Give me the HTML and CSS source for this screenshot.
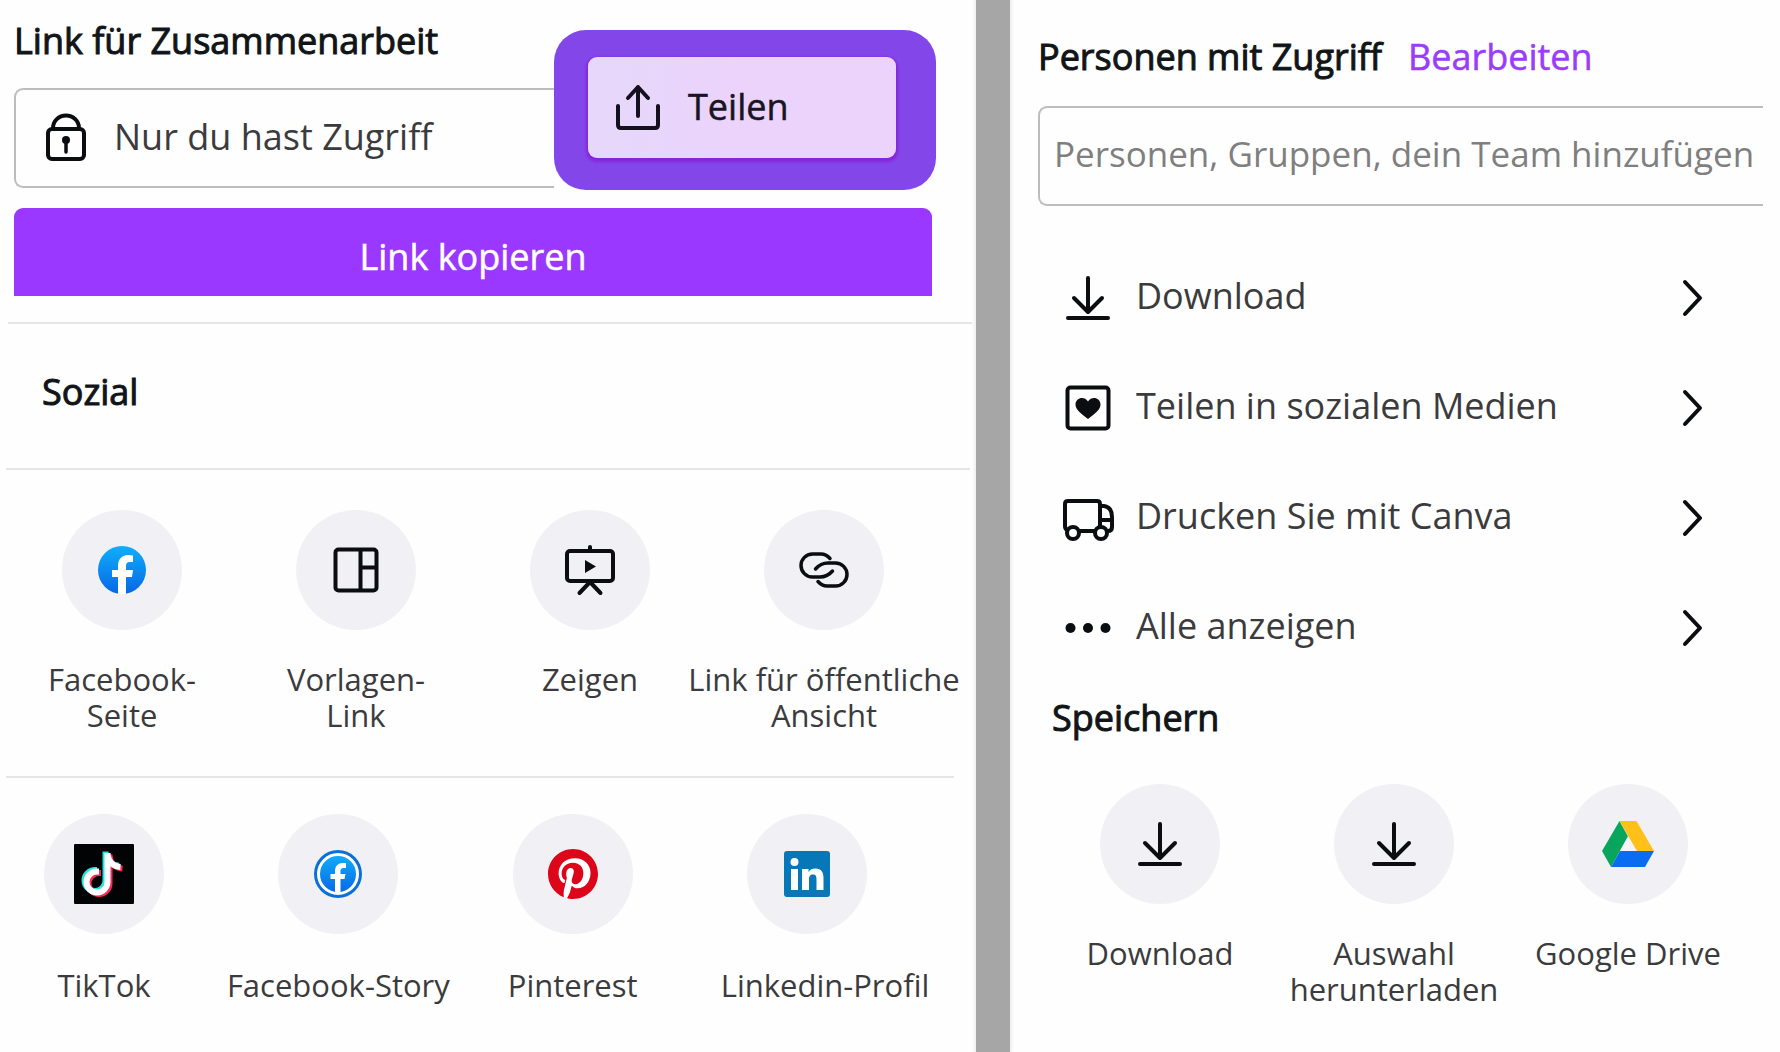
FILE: index.html
```html
<!DOCTYPE html>
<html lang="de">
<head>
<meta charset="utf-8">
<meta name="viewport" content="width=device-width, initial-scale=1">
<title>Teilen</title>
<link rel="stylesheet" href="styles.css">
</head>
<body>
<main class="page">
  <section class="panel panel-share">
    <div class="top">
      <div class="access">
        <h2 class="title">Link für Zusammenarbeit</h2>
        <button type="button" class="field">
          <svg class="lock" viewBox="0 0 40 48" width="40" height="48" fill="none" stroke="#0b0d10" stroke-width="4"><rect x="2" y="16" width="36" height="30" rx="4"/><path d="M7 16v-1a13 12.500 0 0 1 26 0v1"/><circle cx="20" cy="27" r="4" fill="#0b0d10" stroke="none"/><path d="M20 28v11" stroke-width="3.500" stroke-linecap="round"/></svg>
          <span>Nur du hast Zugriff</span>
        </button>
      </div>
      <div class="highlight">
        <button type="button" class="share">
          <svg viewBox="0 0 44 46" width="44" height="46" fill="none" stroke="#15101f" stroke-width="4" stroke-linecap="round" stroke-linejoin="round"><path d="M2 22v19q0 3 3 3h34q3 0 3-3V22M22 32V3M12 14 22 3l10 11"/></svg>
          <span>Teilen</span>
        </button>
      </div>
    </div>
    <button type="button" class="copy">Link kopieren</button>

    <h2 class="title social">Sozial</h2>

    <div class="tiles tiles-links">
      <button type="button" class="tile">
        <span class="disc"><svg viewBox="0 0 48 48" width="48" height="48"><defs><linearGradient id="fb" x1="0" y1="0" x2="0" y2="1"><stop offset="0" stop-color="#10aefb"/><stop offset="1" stop-color="#0767e4"/></linearGradient></defs><circle cx="24" cy="24" r="24" fill="url(#fb)"/><path d="M20 48V31h-6v-7h6v-4c0-7 4-11 10-11q3 0 5 .5V16h-3c-3 0-4 1.500-4 4v4h7l-1 7h-6v17z" fill="#fff"/></svg></span>
        <span>Facebook-<br>Seite</span>
      </button>
      <button type="button" class="tile">
        <span class="disc"><svg viewBox="0 0 46 46" width="46" height="46" fill="none" stroke="#0b0d10" stroke-width="4"><rect x="2.500" y="2.500" width="41" height="41" rx="3"/><path d="M27.500 2v42M27.500 20.500H44"/></svg></span>
        <span>Vorlagen-<br>Link</span>
      </button>
      <button type="button" class="tile">
        <span class="disc"><svg viewBox="0 0 50 52" width="50" height="52" fill="none" stroke="#0b0d10" stroke-width="4" stroke-linecap="round"><rect x="2" y="7" width="46" height="30" rx="3"/><path d="M25 3v4M25 38 14.500 49M25 38l10.500 11"/><path d="m20 16 11 6.500L20 29z" fill="#0b0d10" stroke="none"/></svg></span>
        <span>Zeigen</span>
      </button>
      <button type="button" class="tile">
        <span class="disc"><svg viewBox="0 0 50 36" width="50" height="36" fill="none" stroke="#0b0d10" stroke-width="3.500" stroke-linecap="round"><path d="M31 6.500Q27 2 22 2h-8.500a11.500 11.500 0 0 0 0 23H21c6 0 9-2 12.500-6"/><path d="M19 29.500Q23 34 28 34h8.500a11.500 11.500 0 0 0 0-23H29c-6 0-9 2-12.500 6"/></svg></span>
        <span>Link für öffentliche<br>Ansicht</span>
      </button>
    </div>

    <div class="tiles tiles-social">
      <button type="button" class="tile">
        <span class="disc"><svg viewBox="0 0 60 60" width="60" height="60"><rect width="60" height="60" rx="1" fill="#020305"/><g fill="none" stroke-width="6"><path d="M33.500 9v29a10.500 10.500 0 1 1-10.500-10.500h2M33.500 10c1 8 6 12.500 13 13" stroke="#25e5de" transform="translate(-2 -1.500)"/><path d="M33.500 9v29a10.500 10.500 0 1 1-10.500-10.500h2M33.500 10c1 8 6 12.500 13 13" stroke="#f9275a" transform="translate(2 1.500)"/><path d="M33.500 9v29a10.500 10.500 0 1 1-10.500-10.500h2M33.500 10c1 8 6 12.500 13 13" stroke="#fff"/></g></svg></span>
        <span>TikTok</span>
      </button>
      <button type="button" class="tile">
        <span class="disc"><svg viewBox="0 0 48 48" width="48" height="48"><circle cx="24" cy="24" r="24" fill="#0b6fd8"/><circle cx="24" cy="24" r="19.500" fill="url(#fb)" stroke="#fff" stroke-width="3"/><path d="M21 43V29h-4.500v-5H21v-3c0-5 3-8 8-8h3v5h-2.500c-2 0-3 1-3 3v3h5l-1 5h-4v14z" fill="#fff"/></svg></span>
        <span>Facebook-Story</span>
      </button>
      <button type="button" class="tile">
        <span class="disc"><svg viewBox="0 0 24 24" width="50" height="50"><circle cx="12" cy="12" r="11.500" fill="#fff"/><path fill="#dc0519" d="M12 0C5.373 0 0 5.373 0 12c0 5.084 3.163 9.426 7.627 11.174-.105-.949-.2-2.405.042-3.441.218-.937 1.407-5.965 1.407-5.965s-.359-.719-.359-1.782c0-1.668.967-2.914 2.171-2.914 1.023 0 1.518.769 1.518 1.690 0 1.029-.655 2.568-.994 3.995-.283 1.194.599 2.169 1.777 2.169 2.133 0 3.772-2.249 3.772-5.495 0-2.873-2.064-4.882-5.012-4.882-3.414 0-5.418 2.561-5.418 5.207 0 1.031.397 2.138.893 2.738.98.119.112.224.83.345l-.333 1.360c-.53.220-.174.267-.402.161-1.499-.698-2.436-2.889-2.436-4.649 0-3.785 2.750-7.262 7.929-7.262 4.163 0 7.398 2.967 7.398 6.931 0 4.136-2.607 7.464-6.227 7.464-1.216 0-2.359-.631-2.750-1.378l-.748 2.853c-.271 1.043-1.002 2.350-1.492 3.146C9.570 23.812 10.763 24 12 24c6.627 0 12-5.373 12-12S18.627 0 12 0z"/></svg></span>
        <span>Pinterest</span>
      </button>
      <button type="button" class="tile">
        <span class="disc"><svg viewBox="0 0 46 46" width="46" height="46"><rect width="46" height="46" rx="3" fill="#0777b8"/><g fill="#fff"><circle cx="10.500" cy="11" r="4"/><path d="M7 18h7v21H7zM18 18h6.500v3c1.500-2.500 4-3.600 7-3.600 6 0 8 4 8 9.600v12h-7V28.500c0-3-.5-5-3.500-5s-4 2-4 5V39h-7z"/></g></svg></span>
        <span class="label-end">Linkedin-Profil</span>
      </button>
    </div>
  </section>

  <div class="divider"></div>

  <section class="panel panel-people">
    <div class="people-head">
      <h2 class="title">Personen mit Zugriff</h2>
      <a class="edit" href="#">Bearbeiten</a>
    </div>
    <input class="people" type="text" aria-label="Personen hinzufügen" placeholder="Personen, Gruppen, dein Team hinzufügen">

    <nav class="actions">
      <button type="button" class="action">
        <span class="icon"><svg viewBox="0 0 46 46" width="46" height="46" fill="none" stroke="#0b0d10" stroke-width="4" stroke-linecap="round" stroke-linejoin="round"><path d="M23 3v33M9 23l14 14 14-14"/><path d="M3 43h40"/></svg></span>
        <span class="action-label">Download</span>
        <svg class="chevron" viewBox="0 0 22 38" width="22" height="38" fill="none" stroke="#0b0d10" stroke-width="4" stroke-linecap="round" stroke-linejoin="round"><path d="m3 3 15 16L3 35"/></svg>
      </button>
      <button type="button" class="action">
        <span class="icon"><svg viewBox="0 0 46 46" width="46" height="46" fill="none" stroke="#0b0d10" stroke-width="4"><rect x="2.500" y="2.500" width="41" height="41" rx="3"/><path d="M23 34C17 29 10.500 25 10.500 19.500c0-7 9-9 12.500-3 3.500-6 12.500-4 12.500 3C35.500 25 29 29 23 34z" fill="#0b0d10" stroke="none"/></svg></span>
        <span class="action-label">Teilen in sozialen Medien</span>
        <svg class="chevron" viewBox="0 0 22 38" width="22" height="38" fill="none" stroke="#0b0d10" stroke-width="4" stroke-linecap="round" stroke-linejoin="round"><path d="m3 3 15 16L3 35"/></svg>
      </button>
      <button type="button" class="action">
        <span class="icon"><svg viewBox="0 -4 52 46" width="52" height="46" fill="none" stroke="#0b0d10" stroke-width="4" stroke-linejoin="round"><path d="M5 31q-2-1-2-4V5q0-3 3-3h29q3 0 3 3v27H17M38 7h4q8 1 8 11v10q0 4-4 4M38 21h12"/><circle cx="11" cy="34" r="6" fill="#fff"/><circle cx="39" cy="34" r="6" fill="#fff"/></svg></span>
        <span class="action-label">Drucken Sie mit Canva</span>
        <svg class="chevron" viewBox="0 0 22 38" width="22" height="38" fill="none" stroke="#0b0d10" stroke-width="4" stroke-linecap="round" stroke-linejoin="round"><path d="m3 3 15 16L3 35"/></svg>
      </button>
      <button type="button" class="action">
        <span class="icon"><svg viewBox="0 0 46 12" width="46" height="12" fill="#0b0d10"><circle cx="5.500" cy="6" r="5"/><circle cx="23" cy="6" r="5"/><circle cx="40.500" cy="6" r="5"/></svg></span>
        <span class="action-label">Alle anzeigen</span>
        <svg class="chevron" viewBox="0 0 22 38" width="22" height="38" fill="none" stroke="#0b0d10" stroke-width="4" stroke-linecap="round" stroke-linejoin="round"><path d="m3 3 15 16L3 35"/></svg>
      </button>
    </nav>

    <h2 class="title save">Speichern</h2>
    <div class="tiles tiles-save">
      <button type="button" class="tile">
        <span class="disc"><svg viewBox="0 0 46 46" width="46" height="46" fill="none" stroke="#0b0d10" stroke-width="4" stroke-linecap="round" stroke-linejoin="round"><path d="M23 3v33M8 22l15 15 15-15"/><path d="M3 43h40"/></svg></span>
        <span>Download</span>
      </button>
      <button type="button" class="tile">
        <span class="disc"><svg viewBox="0 0 46 46" width="46" height="46" fill="none" stroke="#0b0d10" stroke-width="4" stroke-linecap="round" stroke-linejoin="round"><path d="M23 3v33M8 22l15 15 15-15"/><path d="M3 43h40"/></svg></span>
        <span>Auswahl <br>herunterladen</span>
      </button>
      <button type="button" class="tile">
        <span class="disc"><svg viewBox="0 0 52 46" width="52" height="46"><path d="M17.500 0 26 15.500 9 46 0 30z" fill="#08a65c"/><path d="M17.500 0h17L52 30H35z" fill="#ffc018"/><path d="M18 30h34l-9 16H9z" fill="#0a6cf0"/><path d="M26 15.500 34.500 30H18z" fill="#f4f5f8"/></svg></span>
        <span>Google Drive</span>
      </button>
    </div>
  </section>
</main>
</body>
</html>
```
FILE: styles.css
```css
* { box-sizing: border-box; }

body {
  margin: 0;
  background: #fefefe;
  color: #3b3b3d;
  font-family: "Open Sans", "Noto Sans", sans-serif;
  font-size: 36px;
  line-height: 50px;
}

button, input {
  font: inherit;
  color: inherit;
  background: none;
  border: 0;
  padding: 0;
  margin: 0;
  border-radius: 0;
}

svg { display: block; flex: none; }

.page {
  display: grid;
  grid-template-columns: minmax(0, 976fr) 34px minmax(0, 770fr);
  min-height: 100vh;
  overflow: hidden;
}

.divider {
  background: #a6a6a6;
  box-shadow: 0 0 3px 2px #eeeeee;
}

.title {
  margin: 0;
  font-size: 36px;
  font-weight: 500;
  color: #111518;
  white-space: nowrap;
}

/* Medium weight, between the regular and semibold cuts */
.title, .edit, .share, .copy { -webkit-text-stroke: 1px currentColor; }
.share, .share svg, .copy, .edit { -webkit-text-stroke-width: 0.5px; }

/* Share panel */
.panel-share { padding-top: 16px; }

.top {
  display: flex;
  align-items: flex-start;
  padding: 0 40px 0 14px;
}

.access { flex: 1; min-width: 0; }

.field {
  display: flex;
  align-items: center;
  gap: 28px;
  width: 100%;
  height: 100px;
  margin-top: 22px;
  padding: 0 0 2px 30px;
  border: 2px solid #bdbdbd;
  border-right: 0;
  border-radius: 9px 0 0 9px;
  white-space: nowrap;
}

.highlight {
  flex: none;
  margin-top: 14px;
  padding: 27px 40px 32px 34px;
  background: #8347e9;
  border-radius: 32px;
}

.share {
  display: flex;
  align-items: center;
  gap: 28px;
  width: 308px;
  height: 101px;
  padding: 0 0 2px 28px;
  border-radius: 9px;
  background: linear-gradient(90deg, #e5d8fb, #ecd3fb 50%);
  box-shadow: 0 2px 3px 2px #8526da;
  color: #181422;
  font-weight: 500;
}

.copy {
  display: block;
  width: calc(100% - 58px);
  height: 88px;
  margin: 18px 44px 26px 14px;
  padding-top: 10px;
  border-radius: 9px 9px 0 0;
  background: #9a38ff;
  color: #ffffff;
  font-weight: 500;
}

.social {
  margin: 0 4px 0 8px;
  padding: 43px 0 51px 34px;
  border-top: 2px solid #e5e5e5;
}

/* Round icon tiles */
.tiles {
  display: flex;
  justify-content: space-between;
  align-items: flex-start;
}

.tile {
  display: flex;
  flex-direction: column;
  align-items: center;
  gap: 31px;
  width: 120px;
  font-size: 31px;
  line-height: 36px;
  white-space: nowrap;
}

.disc {
  display: flex;
  align-items: center;
  justify-content: center;
  width: 120px;
  height: 120px;
  border-radius: 50%;
  background: #f1f1f5;
}

.tiles-links {
  margin: 0 6px;
  padding: 40px 86px 43px 56px;
  border-top: 2px solid #e5e5e5;
}

.tiles-social {
  margin: 0 22px 0 6px;
  padding: 36px 87px 46px 38px;
  border-top: 2px solid #e5e5e5;
}

.tiles-social .tile { gap: 33px; }

.label-end { margin-left: 36px; }

/* People panel */
.panel-people { padding: 32px 0 0 28px; }

.people-head {
  display: flex;
  align-items: center;
  gap: 26px;
}

.edit {
  color: #9a3cfa;
  font-weight: 500;
  text-decoration: none;
}

.people {
  display: block;
  width: calc(100% - 17px);
  height: 100px;
  margin-top: 24px;
  padding: 0 0 6px 14px;
  border: 2px solid #bdbdbd;
  border-right: 0;
  border-radius: 9px 0 0 9px;
  font-size: 35px;
}

.people::placeholder { color: #7f7f7f; opacity: 1; }

.actions { margin-top: 37px; }

.action {
  display: flex;
  align-items: center;
  width: 100%;
  height: 110px;
  padding: 0 76px 0 24px;
  text-align: left;
  white-space: nowrap;
}

.action-label { padding-bottom: 4px; }

.icon {
  display: flex;
  justify-content: center;
  width: 52px;
  margin-right: 22px;
}

.chevron { margin-left: auto; }

.save { padding: 10px 0 0 14px; }

.tiles-save { padding: 41px 92px 32px 62px; }
```
